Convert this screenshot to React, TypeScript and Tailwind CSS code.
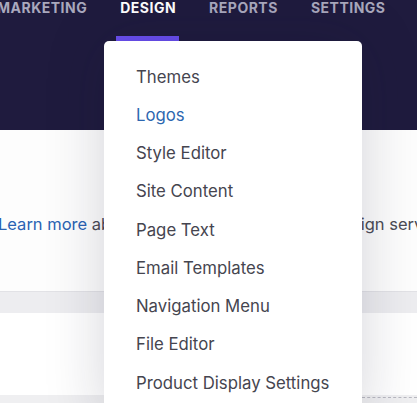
import React from "react";

const menuItems = [
  "Themes",
  "Logos",
  "Style Editor",
  "Site Content",
  "Page Text",
  "Email Templates",
  "Navigation Menu",
  "File Editor",
  "Product Display Settings",
];

const navItems = ["MARKETING", "DESIGN", "REPORTS", "SETTINGS"];

export default function App() {
  return (
    <div className="relative h-[403px] w-[417px] overflow-hidden bg-white font-['Inter',sans-serif]">
      <header className="h-[130px] bg-[#1f1b3e]">
        <nav className="-ml-[3px] flex gap-[33px]">
          {navItems.map((item) => (
            <div key={item} className="relative">
              <span
                className={`block text-[14px] font-bold leading-[16px] tracking-[0.5px] ${
                  item === "DESIGN" ? "text-white" : "text-[#a9a8bd]"
                }`}
              >
                {item}
              </span>
              {item === "DESIGN" ? (
                <span className="absolute -left-[4px] -right-[3px] top-[36px] h-[5px] bg-[#6a4ff0]" />
              ) : null}
            </div>
          ))}
        </nav>
      </header>

      <main>
        <div className="h-[161px] bg-[#fdfdfd] pt-[82px]">
          <p className="-ml-[2px] whitespace-nowrap text-[16.5px] text-[#4b4b55]">
            <span className="text-[#2a63b3]">Learn more</span>{" "}
            <span className="tracking-[-0.15px]">about how to adjust the look of des</span>ign services
          </p>
        </div>
        <div className="h-[22px] border-t border-[#e2e2e6] bg-[#ededf0]" />
        <div className="h-[82px] bg-white" />
        <div className="relative h-[20px] bg-[#efeff1]">
          <div className="absolute left-[362px] right-0 top-[2px] border-t border-dashed border-[#b8b8c0]" />
        </div>
      </main>

      <div className="absolute left-[104px] top-[41px] w-[258px] rounded-[5px] bg-white pt-[17px] pb-[20px] shadow-[0_0_60px_rgba(20,20,50,0.18)]">
        <ul>
          {menuItems.map((item) => (
            <li
              key={item}
              className={`flex h-[38.25px] items-center pl-[32px] text-[16.75px] ${
                item === "Logos" ? "text-[#2d67b0]" : "text-[#45454f]"
              }`}
            >
              {item}
            </li>
          ))}
        </ul>
      </div>
    </div>
  );
}
